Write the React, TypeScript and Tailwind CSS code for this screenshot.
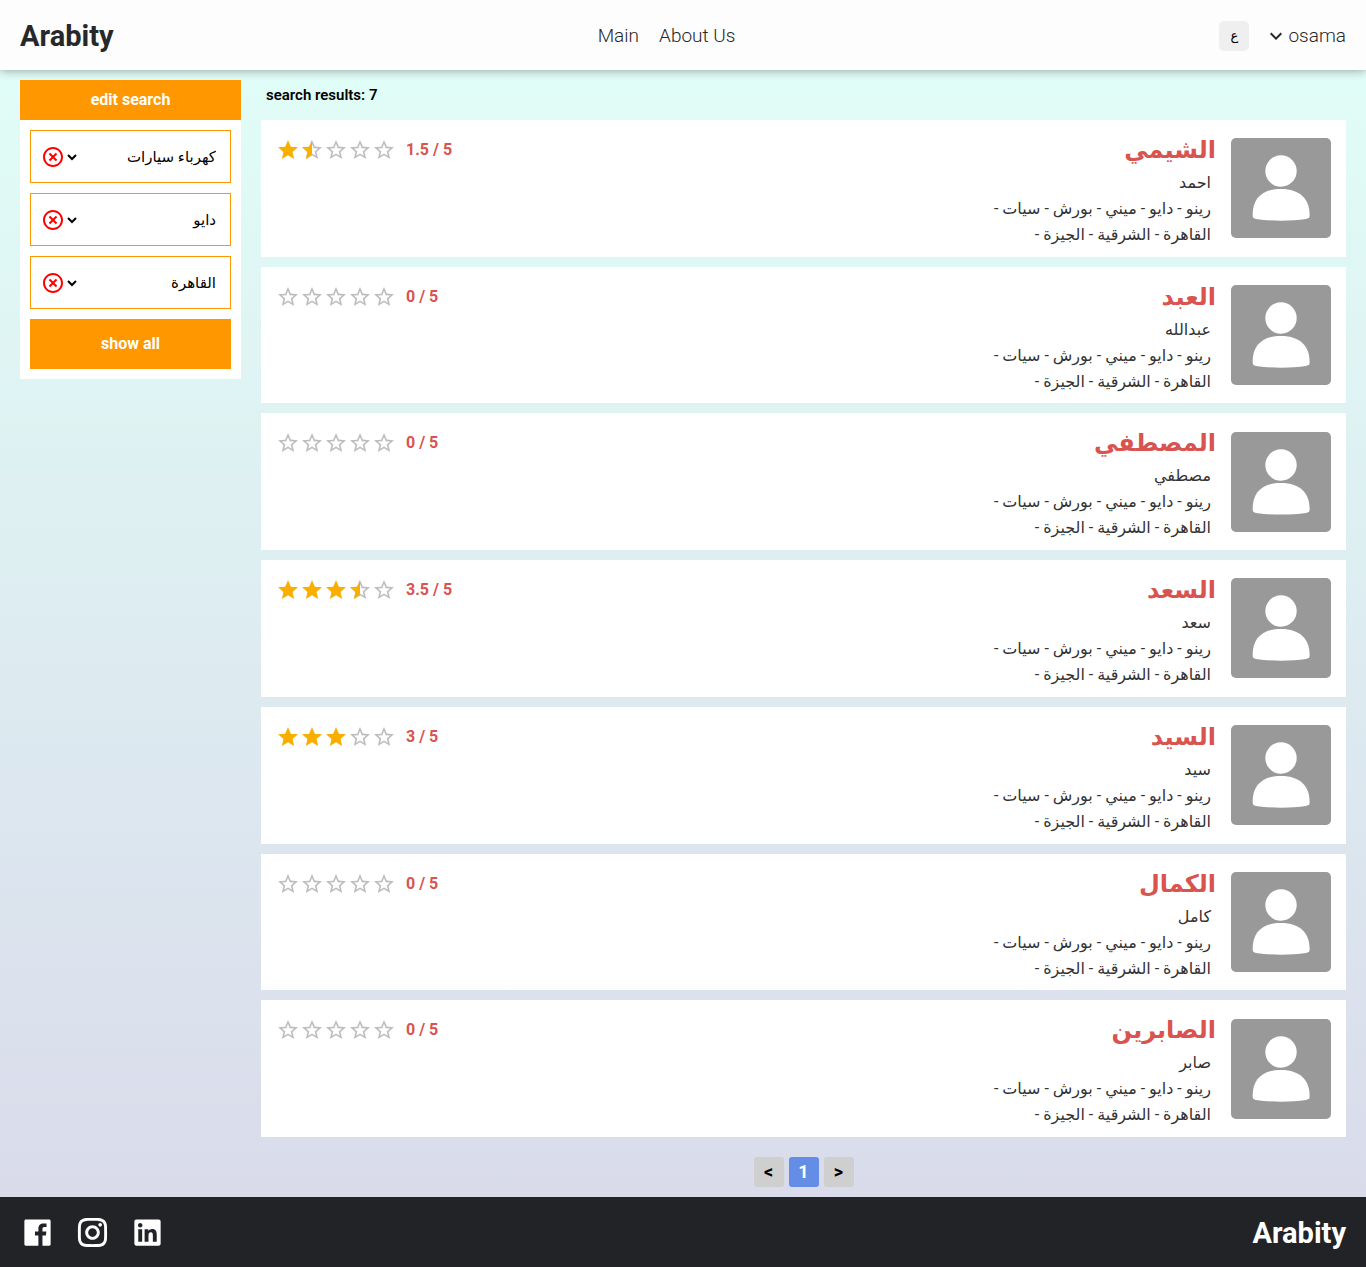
import React from "react";
import { MdExpandMore, MdStar, MdStarBorder } from "react-icons/md";
import {
  RiCloseCircleLine,
  RiFacebookBoxFill,
  RiInstagramLine,
  RiLinkedinBoxFill,
} from "react-icons/ri";

type Worker = { shop: string; name: string; rating: number };

const workers: Worker[] = [
  { shop: "الشيمي", name: "احمد", rating: 1.5 },
  { shop: "العبد", name: "عبدالله", rating: 0 },
  { shop: "المصطفي", name: "مصطفي", rating: 0 },
  { shop: "السعد", name: "سعد", rating: 3.5 },
  { shop: "السيد", name: "سيد", rating: 3 },
  { shop: "الكمال", name: "كامل", rating: 0 },
  { shop: "الصابرين", name: "صابر", rating: 0 },
];

const brands = ["رينو", "دايو", "ميني", "بورش", "سيات"];
const cities = ["القاهرة", "الشرقية", "الجيزة"];

const filters = [
  { label: "specialization", value: "كهرباء سيارات" },
  { label: "brand", value: "دايو" },
  { label: "city", value: "القاهرة" },
];

function Star({ fill }: { fill: number }) {
  if (fill >= 1) return <MdStar className="size-6 text-[#faaf00]" />;
  if (fill <= 0) return <MdStarBorder className="size-6 text-[#bdbdbd]" />;
  return (
    <span className="relative size-6">
      <MdStarBorder className="size-6 text-[#bdbdbd]" />
      <span className="absolute inset-y-0 left-0 w-1/2 overflow-hidden">
        <MdStar className="size-6 text-[#faaf00]" />
      </span>
    </span>
  );
}

function Rating({ value }: { value: number }) {
  return (
    <div className="flex h-10 items-center">
      <div className="flex" role="img" aria-label={`${value} stars`}>
        {[0, 1, 2, 3, 4].map((i) => (
          <Star key={i} fill={value - i} />
        ))}
      </div>
      <span className="ml-2.5 text-base font-bold text-[#d9534f]">{value} / 5</span>
    </div>
  );
}

function Avatar() {
  return (
    <svg viewBox="0 0 100 100" className="size-[100px] shrink-0 rounded-[5px] bg-[#999999]" aria-hidden="true">
      <circle cx="50" cy="33" r="15.7" fill="#fff" />
      <path d="M21.7 78 C21 62 30 51 50 51 C70 51 79 62 78.6 78 C78.5 80 77 80.5 75 80.9 C60 83.2 40 83.2 25 80.9 C23 80.5 21.8 80 21.7 78Z" fill="#fff" />
    </svg>
  );
}

function WorkerCard({ worker }: { worker: Worker }) {
  return (
    <article className="flex items-center justify-between bg-white px-[15px]">
      <div className="self-start pt-2.5">
        <Rating value={worker.rating} />
      </div>
      <div className="flex items-center gap-[15px] self-stretch">
        <div dir="rtl" className="self-start pt-2.5 text-base leading-[26px] text-[#333]">
          <h2 className="text-2xl leading-10 font-bold text-[#d9534f]">{worker.shop}</h2>
          <p className="px-[5px]">{worker.name}</p>
          <p className="px-[5px]">{brands.map((b) => `${b} - `).join("")}</p>
          <p className="px-[5px]">{cities.map((c) => `${c} - `).join("")}</p>
        </div>
        <Avatar />
      </div>
    </article>
  );
}

export default function App() {
  return (
    <div className="flex min-h-screen flex-col bg-linear-to-b from-[#e1fff7] to-[#d9d9ea] font-['Roboto','DejaVu_Sans',sans-serif] text-black">
      <header className="relative flex h-[70px] items-center justify-between bg-[#fdfdfd] px-5 text-[#272829] shadow-[0_0_10px_rgba(0,0,0,0.4)]">
        <a href="#" className="pt-1 text-[29px] font-bold">Arabity</a>
        <nav className="flex gap-5 pt-0.5 text-[19px] font-light">
          <a href="#main">Main</a>
          <a href="#about">About Us</a>
        </nav>
        <div className="flex items-center gap-[15px] pt-0.5">
          <button type="button" className="size-[30px] rounded-[5px] bg-[#efefef] text-[13px] text-black">ع</button>
          <button type="button" className="flex items-center text-[19px] font-light">
            <MdExpandMore className="size-6" />
            osama
          </button>
        </div>
      </header>

      <div className="flex flex-1 gap-5 px-5 py-2.5">
        <aside className="w-1/6 shrink-0 self-start bg-white">
          <h2 className="bg-[#ff9800] text-center text-base leading-10 font-bold text-white">edit search</h2>
          <div className="flex flex-col gap-2.5 p-2.5">
            {filters.map((f) => (
              <div key={f.label} className="flex h-[53px] items-center border border-[#ff9800] px-2.5">
                <button type="button" aria-label={`clear ${f.label}`} className="text-[#ff0000]">
                  <RiCloseCircleLine className="size-6" />
                </button>
                <select aria-label={f.label} dir="rtl" className="h-10 min-w-0 flex-1 text-[15px] text-black" defaultValue={f.value}>
                  <option>{f.value}</option>
                </select>
              </div>
            ))}
            <button type="button" className="h-[50px] bg-[#ff9800] text-base font-bold text-white">show all</button>
          </div>
        </aside>

        <main className="flex min-w-0 flex-1 flex-col">
          <p className="px-[5px] pb-2.5 text-[15px] leading-[30px] font-semibold">search results: 7</p>
          <div className="grid flex-1 auto-rows-fr gap-2.5">
            {workers.map((w) => (
              <WorkerCard key={w.shop} worker={w} />
            ))}
          </div>
          <nav aria-label="pages" className="flex justify-center gap-[5px] pt-5 text-lg font-bold">
            <button type="button" className="size-[30px] rounded-[3px] bg-[#cfcfcf]">&lt;</button>
            <button type="button" className="size-[30px] rounded-[3px] bg-[#648de5] text-white">1</button>
            <button type="button" className="size-[30px] rounded-[3px] bg-[#cfcfcf]">&gt;</button>
          </nav>
        </main>
      </div>

      <footer className="flex h-[70px] items-center justify-between bg-[#222327] px-5 text-white">
        <div className="flex gap-5">
          <a href="#facebook" aria-label="Facebook"><RiFacebookBoxFill className="size-[35px]" /></a>
          <a href="#instagram" aria-label="Instagram"><RiInstagramLine className="size-[35px]" /></a>
          <a href="#linkedin" aria-label="LinkedIn"><RiLinkedinBoxFill className="size-[35px]" /></a>
        </div>
        <span className="pt-1 text-[29px] font-bold">Arabity</span>
      </footer>
    </div>
  );
}
